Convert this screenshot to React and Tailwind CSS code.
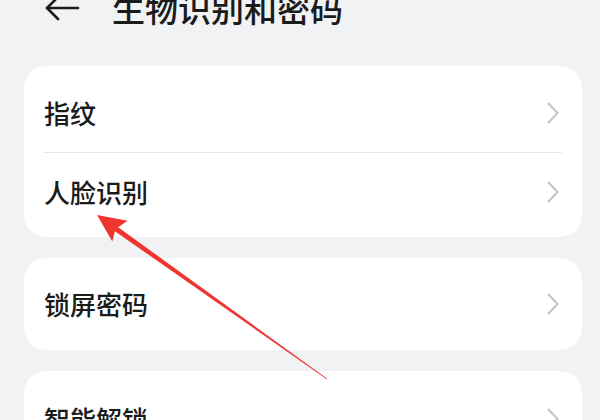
import React from "react";

function Chevron() {
  return (
    <svg width="12" height="22" viewBox="0 0 12 22" className="shrink-0">
      <polyline points="1.5,1.5 10.5,11 1.5,20.5" fill="none" stroke="#c4c4c6" strokeWidth="2" strokeLinecap="round" strokeLinejoin="round" />
    </svg>
  );
}

function Row({ label, className }) {
  return (
    <div className={"flex items-center justify-between pl-[20px] pr-[23px] " + className}>
      <span className="text-[26px] leading-none text-[#1b1b1b] font-medium">{label}</span>
      <Chevron />
    </div>
  );
}

export default function App() {
  return (
    <div
      className="relative w-[600px] h-[420px] overflow-hidden bg-[#f1f2f4]"
      style={{ fontFamily: '"Noto Sans CJK SC", "Noto Sans", sans-serif' }}
    >
      <div className="h-[16px] flex items-center">
        <svg width="36" height="26" viewBox="0 0 36 26" className="ml-[45px] shrink-0">
          <polyline points="13,2 2,13 13,24" fill="none" stroke="#1b1b1b" strokeWidth="2.6" strokeLinecap="round" strokeLinejoin="round" />
          <line x1="2" y1="13" x2="33" y2="13" stroke="#1b1b1b" strokeWidth="2.6" strokeLinecap="round" />
        </svg>
        <span className="ml-[31px] text-[33px] leading-[40px] font-medium text-[#1b1b1b] whitespace-nowrap">生物识别和密码</span>
      </div>

      <div className="ml-[24px] mr-[18px] mt-[50px] flex flex-col gap-[21px]">
        <div className="bg-white rounded-[22px] flex flex-col">
          <Row label="指纹" className="h-[86px] pt-[8px]" />
          <div className="mx-[20px] h-px bg-[#e6e6e8]" />
          <Row label="人脸识别" className="h-[84px] pb-[6px]" />
        </div>
        <div className="bg-white rounded-[22px] flex flex-col">
          <Row label="锁屏密码" className="h-[92px]" />
        </div>
        <div className="bg-white rounded-[22px] flex flex-col">
          <Row label="智能解锁" className="h-[92px] pt-[4px]" />
        </div>
      </div>

      <svg className="absolute left-0 top-0 pointer-events-none" width="600" height="420" viewBox="0 0 600 420">
        <polygon
          points="97,215 127.5,220.8 118.2,227.2 327.3,378.8 326.7,379.2 114.9,231.2 112.3,241.6"
          fill="#ee3530"
        />
      </svg>
    </div>
  );
}
